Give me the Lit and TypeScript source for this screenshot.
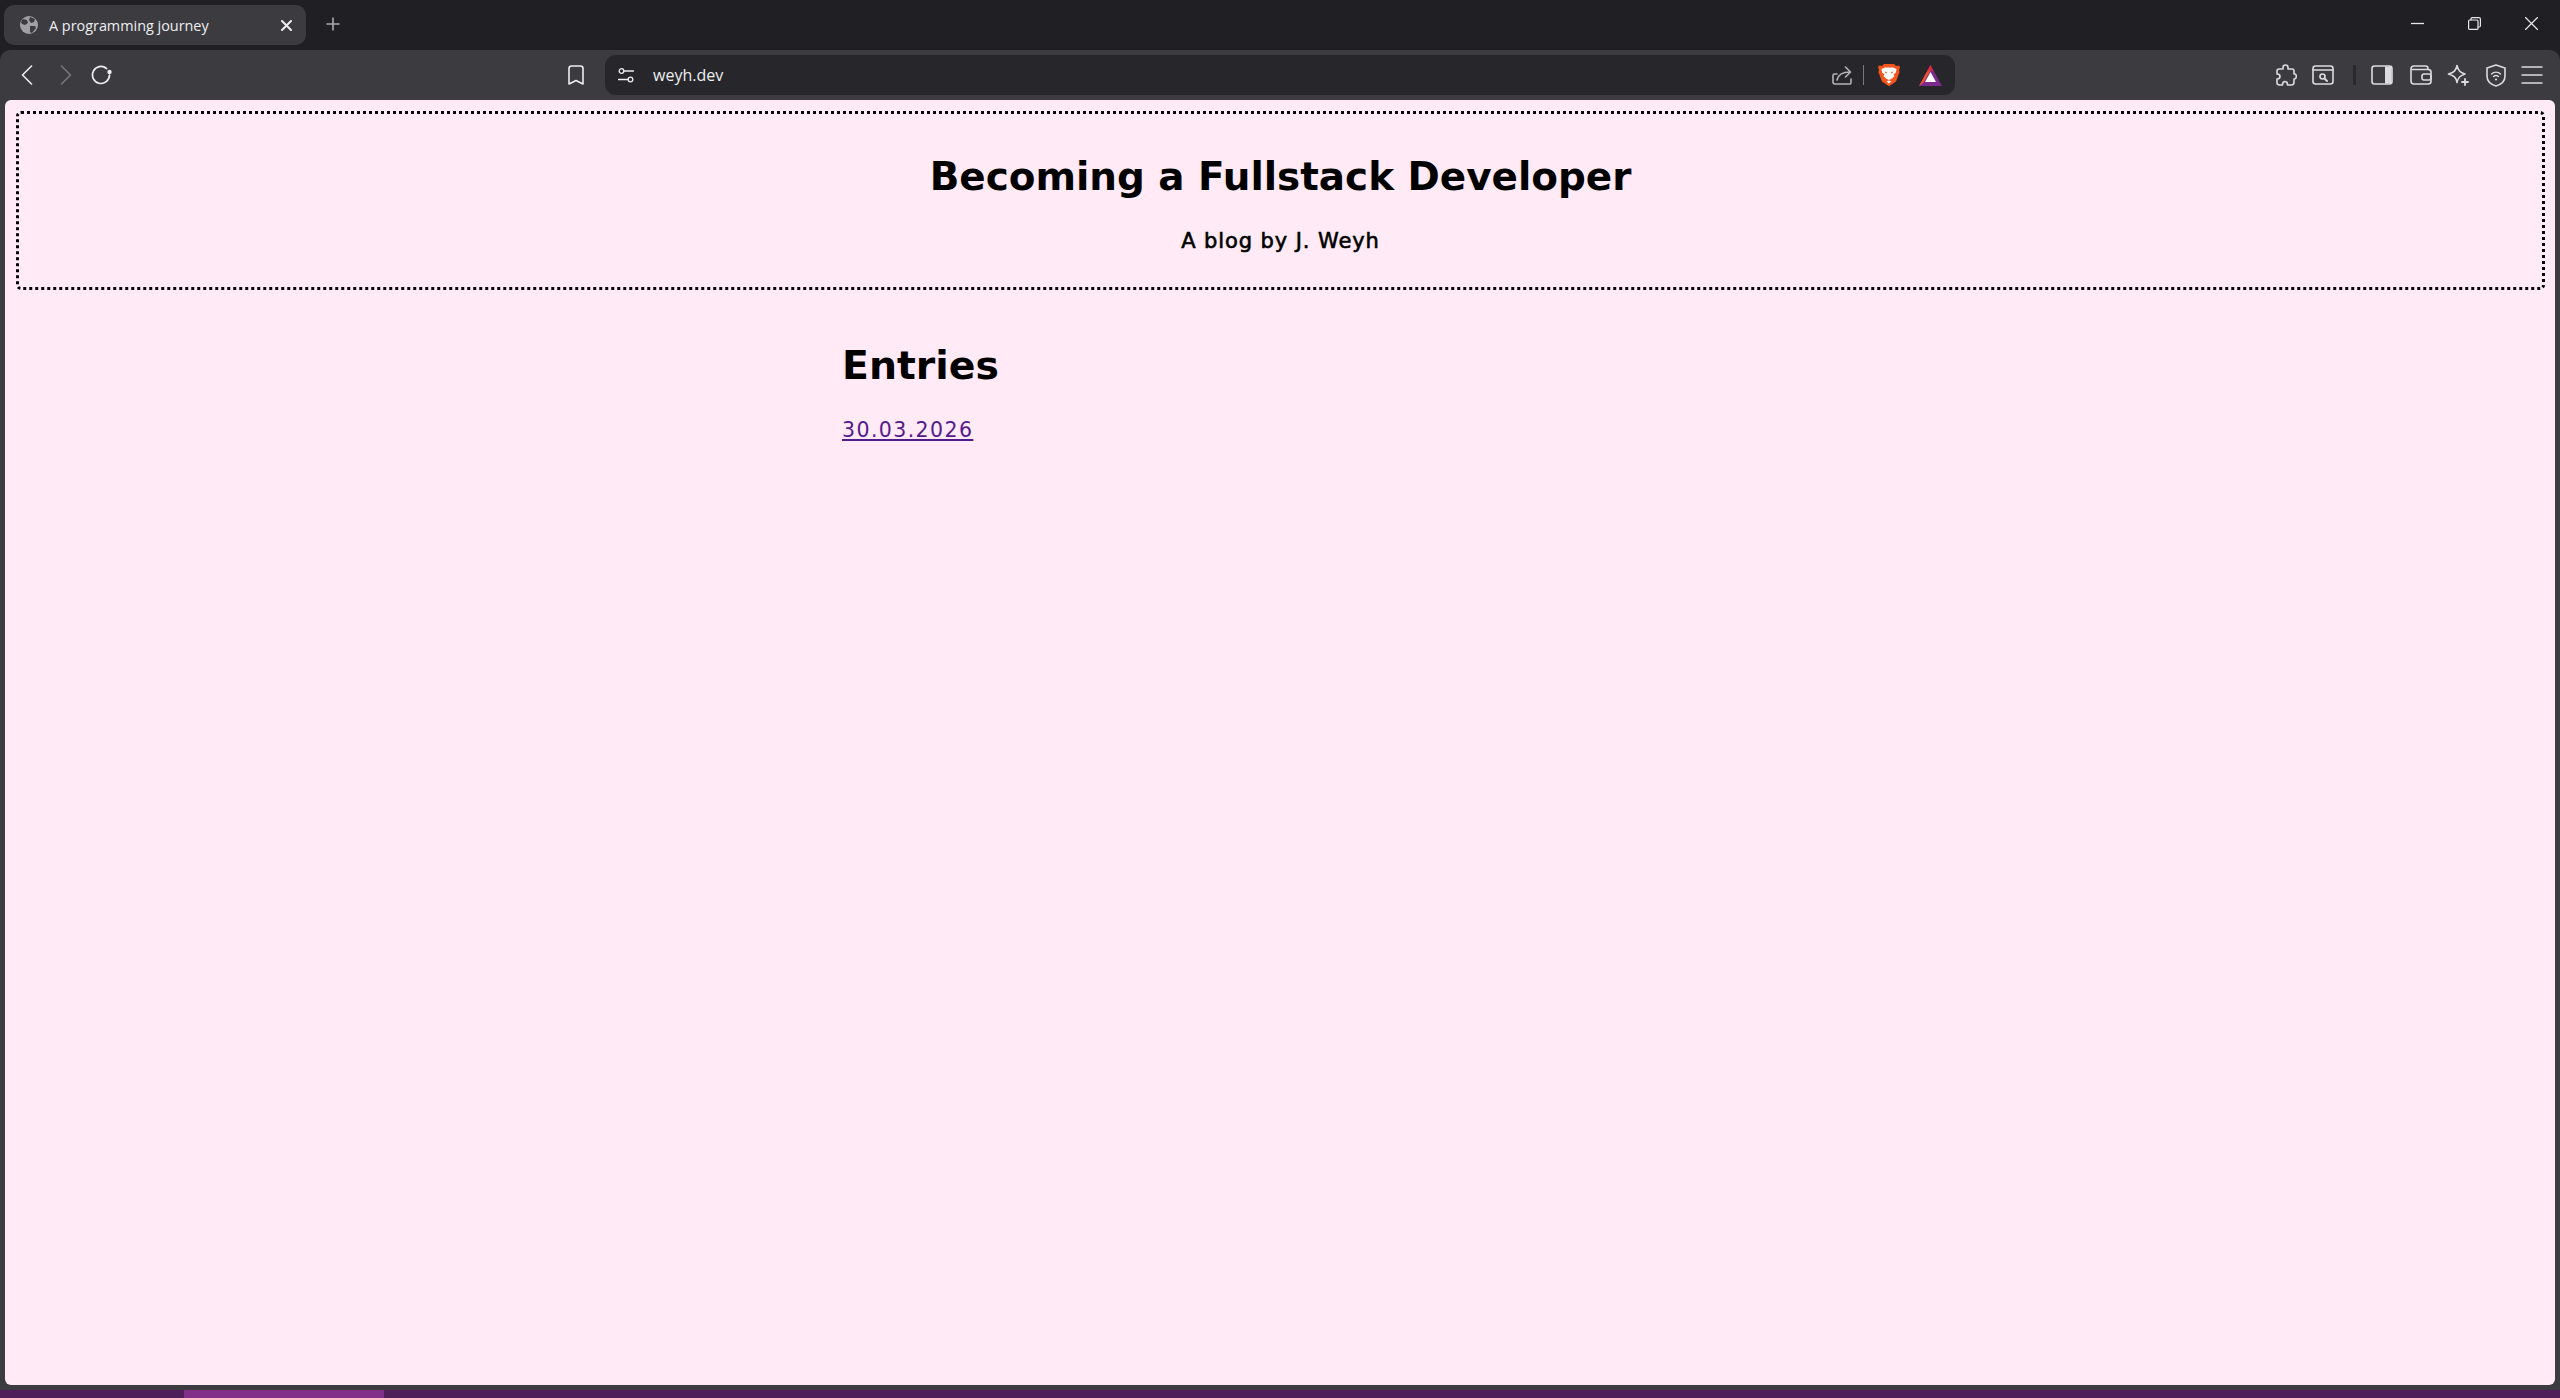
import { LitElement, html, css, svg } from "lit";
import { customElement } from "lit/decorators.js";

const icon = (w: number, h: number, body: unknown) =>
	html`<svg width=${w} height=${h} viewBox="0 0 ${w} ${h}" fill="none" stroke="currentColor" stroke-width="1.6" stroke-linecap="round" stroke-linejoin="round">${body}</svg>`;

const braveLogo = html`<svg width="22" height="24" viewBox="0 0 22 24">
	<path d="M6 1h10l2 2 3-.5 1 1.500-1 3 .6 2-3.600 9.500-7 4.800-7-4.800L.4 9l.6-2-1-3 1-1.500L4 3z" fill="#f4551c"/>
	<path d="M7 4.500h8l3.500 1.500-.6 3.500-2.400 2 1 1.500-2.500 2.500L11 17l-3-1.500L5.500 13l1-1.500-2.400-2L3.500 6z" fill="#fff"/>
	<path d="M6.500 8.500l2.500.8-.8 1.400zM15.500 8.500l-2.500.8.800 1.400z" fill="#f4551c"/>
	<path d="M8.500 18.200l2.500-.8 2.500.8L11 20.500z" fill="#fff"/>
</svg>`;

const batLogo = html`<svg width="23" height="21" viewBox="0 0 23 21">
	<path d="M11.500 0L23 21H0z" fill="#7b2a8c"/>
	<path d="M11.500 0L0 21l4.500-3.500 7-12z" fill="#f0502a"/>
	<path d="M11.500 0L8 7.500l3.500-3 3.500 3z" fill="#e0283c"/>
	<path d="M11.500 7l5.500 10H6z" fill="#fff"/>
</svg>`;

@customElement("app-root")
export class AppRoot extends LitElement {
	static styles = css`
		:host {
			display: flex;
			flex-direction: column;
			height: 1398px;
			background: #1f1f24;
			overflow: hidden;
			font-family: "Open Sans", "Noto Sans", sans-serif;
			color: #eeeef0;
		}
		svg {
			display: block;
			flex: none;
		}

		.tabstrip {
			height: 50px;
			display: flex;
			align-items: flex-start;
			padding: 5px 0 0 4px;
			box-sizing: border-box;
		}
		.tab {
			width: 302px;
			height: 40px;
			box-sizing: border-box;
			background: #3b3b40;
			border-radius: 10px;
			display: flex;
			align-items: center;
			padding: 0 14px 0 16px;
			font-size: 14.4px;
		}
		.tab-title {
			margin-left: 11px;
			flex: 1;
			white-space: nowrap;
		}
		.new-tab {
			margin: 12px 0 0 20px;
			color: #a8a8ad;
		}
		.window-controls {
			margin-left: auto;
			display: flex;
			align-items: center;
			height: 36px;
			padding-right: 22px;
			gap: 44px;
			color: #e8e8ea;
		}

		.toolbar {
			height: 50px;
			background: #3b3b40;
			border-radius: 10px 10px 0 0;
			display: grid;
			grid-template-columns: 557px 48px 1350px 1fr;
			align-items: center;
		}
		.nav {
			display: flex;
			align-items: center;
			padding-left: 21px;
			gap: 27px;
		}
		.nav .off {
			color: #77777c;
		}
		.nav .reload {
			margin-left: -8px;
		}
		.bookmark {
			padding-left: 11px;
		}
		.address {
			height: 40px;
			background: #27272b;
			border-radius: 11px;
			display: flex;
			align-items: center;
			padding: 0 13px 0 13px;
			font-size: 16px;
		}
		.url {
			margin-left: 19px;
			flex: 1;
		}
		.share {
			color: #b4b4b8;
		}
		.divider {
			width: 1px;
			height: 20px;
			background: #77777c;
			margin: 0 14px 0 11px;
		}
		.bat {
			margin-left: 19px;
		}
		.actions {
			display: flex;
			align-items: center;
			padding-left: 320px;
			gap: 15px;
			color: #dcdce0;
		}
		.sep {
			width: 3px;
			height: 20px;
			background: #2a2a2e;
			margin: 0 0 0 4px;
		}
		.wallet {
			margin-left: 2px;
		}
		.vpn {
			margin-left: 2px;
		}

		.frame {
			flex: 1;
			background: #3b3b40;
			padding: 0 5px 5px;
			display: flex;
		}
		.page {
			flex: 1;
			background: #ffeaf6;
			border-radius: 6px;
			padding: 11px 10px 0 11px;
			color: #000;
			font-family: "DejaVu Sans", sans-serif;
			box-sizing: border-box;
		}
		header {
			border: 3px dotted #000;
			border-radius: 5px;
			height: 179px;
			box-sizing: border-box;
			display: flex;
			flex-direction: column;
			align-items: center;
			padding-top: 39px;
		}
		h1 {
			margin: 0;
			font-size: 38.9px;
			line-height: 48px;
			font-weight: 700;
			white-space: nowrap;
		}
		.byline {
			margin: 28px 0 0;
			font-size: 21px;
			line-height: 24px;
			font-weight: 400;
			letter-spacing: 0.9px;
			-webkit-text-stroke: 0.6px #000;
		}
		main {
			width: 877px;
			margin: 0 auto;
			padding-top: 51px;
		}
		h2 {
			margin: 0;
			font-size: 39.4px;
			line-height: 48px;
			font-weight: 700;
		}
		a {
			display: inline-block;
			margin-top: 29px;
			font-size: 20.5px;
			line-height: 24px;
			letter-spacing: 1.4px;
			color: #551a8b;
		}

		.tint {
			height: 8px;
			background: #4e1f58;
		}
		.tint div {
			width: 200px;
			height: 100%;
			margin-left: 184px;
			background: #822f8a;
		}
	`;

	render() {
		return html`
			<div class="tabstrip">
				<div class="tab">
					<svg width="18" height="18" viewBox="0 0 18 18">
						<circle cx="9" cy="9" r="9" fill="#a0a0a5" />
						<path d="M3 3l4 1 1 3-3 2-3-1-1-2zM10 1l5 2-1 3-3 1-2-3zM10 10l5 0 1 2-4 5-2-1z" fill="#3b3b40" />
					</svg>
					<span class="tab-title">A programming journey</span>
					${icon(11, 11, svg`<path d="M1 1l9 9M10 1l-9 9" stroke-width="2" />`)}
				</div>
				<div class="new-tab">${icon(14, 14, svg`<path d="M7 1v12M1 7h12" />`)}</div>
				<div class="window-controls">
					${icon(13, 13, svg`<path d="M0 6.500h13" stroke-linecap="butt" stroke-width="1.300" />`)}
					${icon(13, 13, svg`<rect x=".6" y="3" width="9.400" height="9.400" rx="1" stroke-width="1.200" /><path d="M3 3V1.800C3 1 3.500.6 4.200.6h6.800c1 0 1.400.6 1.400 1.400v6.800c0 .8-.5 1.200-1.200 1.200H10" stroke-width="1.200" />`)}
					${icon(13, 13, svg`<path d="M.5.5l12 12M12.500.5l-12 12" stroke-width="1.200" />`)}
				</div>
			</div>

			<div class="toolbar">
				<div class="nav">
					${icon(12, 20, svg`<path d="M10.500 1L1.500 10l9 9" />`)}
					<span class="off">${icon(12, 20, svg`<path d="M1.500 1l9 9-9 9" />`)}</span>
					<span class="reload">${icon(22, 22, svg`<path d="M18.500 11a8.500 8.500 0 1 1-3-6.500" stroke-width="1.700" /><circle cx="18.500" cy="8" r="2.200" fill="currentColor" stroke="none" />`)}</span>
				</div>
				<div class="bookmark">${icon(16, 20, svg`<path d="M1 3.500C1 1.800 2 1 3.500 1h9C14 1 15 1.800 15 3.500V19l-7-3.500L1 19z" />`)}</div>
				<div class="address">
					${icon(16, 15, svg`<circle cx="3.500" cy="3" r="2.300" stroke-width="1.300" /><path d="M6 3h9.500M.5 11.500H10" stroke-width="1.300" /><circle cx="12.500" cy="11.500" r="2.300" stroke-width="1.300" />`)}
					<span class="url">weyh.dev</span>
					<span class="share">${icon(20, 19, svg`<path d="M5 8H2.500C1.500 8 1 8.500 1 9.500V16c0 1.500 1 2 2 2h15c.7 0 1-.5 1-1.500V13" /><path d="M5 14c1-5 5-8 13-8M13.500 1l5 5-5 5" />`)}</span>
					<span class="divider"></span>
					${braveLogo}
					<span class="bat">${batLogo}</span>
				</div>
				<div class="actions">
					${icon(22, 22, svg`<path d="M8 3.500C8 1.500 9.500 1 10.500 1s2.500.8 2.500 2.500V5h4c1.500 0 2 .8 2 2v3h1c2 .5 1.500 5-.5 5H19v3c0 2-1 3-2.500 3h-4c0-2.500-1-3.500-2.500-3.500S7.500 18.500 7.500 21H4.500C3 21 2 20 2 18.500V15c2 0 3-1 3-2.500S4 10 2 10V7c0-1.200.8-2 2-2h4z" />`)}
					${icon(22, 20, svg`<rect x="1" y="1" width="20" height="18" rx="2.500" /><path d="M1 5h20" /><circle cx="10.500" cy="11.500" r="2.500" /><path d="M12.500 13.500l2.500 2.500" stroke-width="2" />`)}
					<span class="sep"></span>
					${icon(22, 20, svg`<rect x="1" y="1" width="20" height="18" rx="2.500" /><rect x="14" y="1.500" width="6.500" height="17" fill="currentColor" stroke="none" />`)}
					<span class="wallet">${icon(22, 20, svg`<path d="M18 4.500V3.500C18 2 17 1 15.500 1H4C2 1 1 2.500 1 4v12c0 2 1 3 3 3h14c1.500 0 3-1 3-2.500V7c0-1.500-1-2.500-3-2.500H2.500" /><rect x="12" y="9" width="9" height="6" rx="2" />`)}</span>
					${icon(22, 22, svg`<path d="M10 1.500c1 5 3 7 8 8.500-5 1.500-7 3.500-8 8.500-1-5-3-7-8.500-8.500C7 8.500 9 6.500 10 1.500z" /><path d="M18 15v6M15 18h6" stroke-width="1.800" />`)}
					<span class="vpn">${icon(20, 23, svg`<path d="M10 1l9 3v8c0 5-4 8.500-9 10-5-1.500-9-5-9-10V4z" /><path d="M5.500 10c2.500-2.500 6.500-2.500 9 0M7.500 12.500c1.500-1.300 3.500-1.300 5 0" stroke-width="1.400" /><circle cx="10" cy="15.500" r="1.100" fill="currentColor" stroke="none" />`)}</span>
					${icon(22, 18, svg`<path d="M.5 1h21M.5 9h21M.5 17h21" stroke-linecap="butt" />`)}
				</div>
			</div>

			<div class="frame">
				<div class="page">
					<header>
						<h1>Becoming a Fullstack Developer</h1>
						<p class="byline">A blog by J. Weyh</p>
					</header>
					<main>
						<h2>Entries</h2>
						<a href="#">30.03.2026</a>
					</main>
				</div>
			</div>
			<div class="tint"><div></div></div>
		`;
	}
}
